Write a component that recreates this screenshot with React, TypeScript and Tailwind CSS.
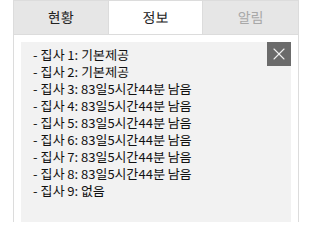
import { X } from "lucide-react";

const tabs = [
  { label: "현황", active: false, muted: false },
  { label: "정보", active: true, muted: false },
  { label: "알림", active: false, muted: true },
];

const rows = [
  "기본제공",
  "기본제공",
  "83일5시간44분 남음",
  "83일5시간44분 남음",
  "83일5시간44분 남음",
  "83일5시간44분 남음",
  "83일5시간44분 남음",
  "83일5시간44분 남음",
  "없음",
];

export default function App() {
  return (
    <div
      className="w-[324px] h-[222px] bg-white overflow-hidden"
      style={{ fontFamily: '"Noto Sans KR", "Noto Sans CJK KR", "Noto Sans", sans-serif' }}
    >
      <div className="ml-[13px] w-[286px] h-full border-x border-[#dcdcdc] flex flex-col">
        {/* Tabs */}
        <div className="grid grid-cols-3 h-[35px] border-y border-[#dcdcdc]">
          {tabs.map((t, i) => (
            <div
              key={t.label}
              className={`flex items-center justify-center text-[14px] ${
                i < 2 ? "border-r border-[#dcdcdc]" : ""
              } ${t.active ? "bg-white" : "bg-[#e6e6e6]"} ${
                t.muted ? "text-[#a8a8a8]" : "text-[#222]"
              }`}
            >
              {t.label}
            </div>
          ))}
        </div>

        {/* Content */}
        <div className="flex-1 pt-[7px] px-[7px]">
          <div className="relative h-full bg-[#f2f2f2] pt-[4px] pl-[12px]">
            <button className="absolute top-0 right-0 w-[24px] h-[24px] bg-[#6b6b6b] flex items-center justify-center">
              <X className="w-[20px] h-[20px] text-[#f0f0f0]" strokeWidth={1.3} />
            </button>
            {rows.map((text, i) => (
              <div key={i} className="text-[13px] leading-[17px] text-[#111]">
                {`- 집사 ${i + 1}: ${text}`}
              </div>
            ))}
          </div>
        </div>
      </div>
    </div>
  );
}
